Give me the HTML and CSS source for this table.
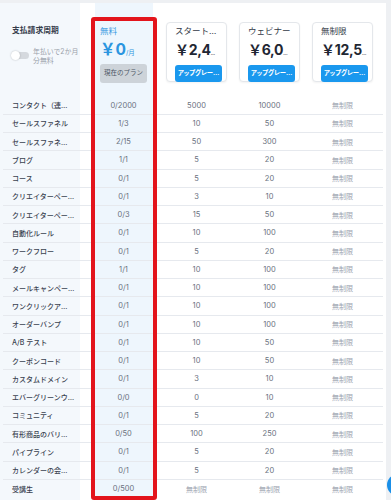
FILE: index.html
```html
<!DOCTYPE html>
<html lang="ja">
<head>
<meta charset="utf-8">
<title>プラン比較</title>
<link rel="stylesheet" href="styles.css">
</head>
<body>
<div class="card">
  <div class="row head">
    <div class="head-label">
      <div class="title">支払請求周期</div>
      <div class="toggle-row">
        <span class="toggle"><span class="knob"></span></span>
        <span class="toggle-text">年払いで2か月<br>分無料</span>
      </div>
    </div>
    <div class="free-head">
      <div class="free-name">無料</div>
      <div class="free-price"><span class="amt">￥0</span><span class="per">/月</span></div>
      <div class="current-btn">現在のプラン</div>
    </div>
    <div class="plan">
      <div class="plan-name">スタート…</div>
      <div class="plan-price"><span class="amt">￥2,4</span><span class="dots">…</span></div>
      <div class="upg">アップグレー…</div>
    </div>
    <div class="plan">
      <div class="plan-name">ウェビナー</div>
      <div class="plan-price"><span class="amt">￥6,0</span><span class="dots">…</span></div>
      <div class="upg">アップグレー…</div>
    </div>
    <div class="plan">
      <div class="plan-name">無制限</div>
      <div class="plan-price"><span class="amt">￥12,5</span><span class="dots">…</span></div>
      <div class="upg">アップグレー…</div>
    </div>
  </div>

  <div class="row data"><span class="lbl">コンタクト（連…</span><span class="val">0/2000</span><span class="val">5000</span><span class="val">10000</span><span class="val unl">無制限</span></div>
  <div class="row data"><span class="lbl">セールスファネル</span><span class="val">1/3</span><span class="val">10</span><span class="val">50</span><span class="val unl">無制限</span></div>
  <div class="row data"><span class="lbl">セールスファネ…</span><span class="val">2/15</span><span class="val">50</span><span class="val">300</span><span class="val unl">無制限</span></div>
  <div class="row data"><span class="lbl">ブログ</span><span class="val">1/1</span><span class="val">5</span><span class="val">20</span><span class="val unl">無制限</span></div>
  <div class="row data"><span class="lbl">コース</span><span class="val">0/1</span><span class="val">5</span><span class="val">20</span><span class="val unl">無制限</span></div>
  <div class="row data"><span class="lbl">クリエイターペー…</span><span class="val">0/1</span><span class="val">3</span><span class="val">10</span><span class="val unl">無制限</span></div>
  <div class="row data"><span class="lbl">クリエイターペー…</span><span class="val">0/3</span><span class="val">15</span><span class="val">50</span><span class="val unl">無制限</span></div>
  <div class="row data"><span class="lbl">自動化ルール</span><span class="val">0/1</span><span class="val">10</span><span class="val">100</span><span class="val unl">無制限</span></div>
  <div class="row data"><span class="lbl">ワークフロー</span><span class="val">0/1</span><span class="val">5</span><span class="val">20</span><span class="val unl">無制限</span></div>
  <div class="row data"><span class="lbl">タグ</span><span class="val">1/1</span><span class="val">10</span><span class="val">100</span><span class="val unl">無制限</span></div>
  <div class="row data"><span class="lbl">メールキャンペー…</span><span class="val">0/1</span><span class="val">10</span><span class="val">100</span><span class="val unl">無制限</span></div>
  <div class="row data"><span class="lbl">ワンクリックア…</span><span class="val">0/1</span><span class="val">10</span><span class="val">100</span><span class="val unl">無制限</span></div>
  <div class="row data"><span class="lbl">オーダーバンプ</span><span class="val">0/1</span><span class="val">10</span><span class="val">100</span><span class="val unl">無制限</span></div>
  <div class="row data"><span class="lbl">A/B テスト</span><span class="val">0/1</span><span class="val">10</span><span class="val">50</span><span class="val unl">無制限</span></div>
  <div class="row data"><span class="lbl">クーポンコード</span><span class="val">0/1</span><span class="val">10</span><span class="val">50</span><span class="val unl">無制限</span></div>
  <div class="row data"><span class="lbl">カスタムドメイン</span><span class="val">0/1</span><span class="val">3</span><span class="val">10</span><span class="val unl">無制限</span></div>
  <div class="row data"><span class="lbl">エバーグリーンウ…</span><span class="val">0/0</span><span class="val">0</span><span class="val">10</span><span class="val unl">無制限</span></div>
  <div class="row data"><span class="lbl">コミュニティ</span><span class="val">0/1</span><span class="val">5</span><span class="val">20</span><span class="val unl">無制限</span></div>
  <div class="row data"><span class="lbl">有形商品のバリ…</span><span class="val">0/50</span><span class="val">100</span><span class="val">250</span><span class="val unl">無制限</span></div>
  <div class="row data"><span class="lbl">パイプライン</span><span class="val">0/1</span><span class="val">5</span><span class="val">20</span><span class="val unl">無制限</span></div>
  <div class="row data"><span class="lbl">カレンダーの会…</span><span class="val">0/1</span><span class="val">5</span><span class="val">20</span><span class="val unl">無制限</span></div>
  <div class="row data last"><span class="lbl">受講生</span><span class="val">0/500</span><span class="val unl">無制限</span><span class="val unl">無制限</span><span class="val unl">無制限</span></div>

  <div class="current-frame"></div>
</div>
<div class="chat-fab"></div>
</body>
</html>
```

FILE: styles.css
```css
* { box-sizing: border-box; margin: 0; padding: 0; }
html, body { background: #eef0f3; }
body {
  font-family: Inter, "Noto Sans CJK JP", sans-serif;
  width: 391px;
  height: 500px;
  overflow: hidden;
  color: #374151;
}
.card {
  position: relative;
  margin-top: 3px;
  width: 386px;
  min-height: 497px;
  background: linear-gradient(to right, #f4f8fc 0 80px, #ffffff 80px 95px, #eef6fd 95px 153px, #ffffff 153px);
}
.row {
  display: grid;
  grid-template-columns: 84px repeat(4, 73px);
  margin: 0 3px;
}
.head { height: 93.5px; align-items: start; }

.head-label { padding: 21px 0 0 9px; }
.title { font-size: 7.8px; font-weight: 700; line-height: 12px; color: #343c4b; }
.toggle-row { display: flex; align-items: flex-start; gap: 4px; margin-top: 11px; }
.toggle {
  position: relative;
  width: 17px; height: 7px;
  margin-top: 4.7px;
  border-radius: 4px;
  background: #d5d9de;
  flex: none;
}
.knob {
  position: absolute;
  left: -1px; top: -1px;
  width: 9px; height: 9px;
  border-radius: 50%;
  background: #fff;
  box-shadow: 0 0 2px rgba(0,0,0,0.25);
}
.toggle-text { font-size: 6.9px; line-height: 9.3px; color: #9aa1ab; }

.free-head { padding: 21.7px 0 0 13px; }
.free-name { font-size: 8.5px; line-height: 12px; color: #3a9be2; }
.free-price { margin-top: 3.3px; line-height: 18px; color: #2b95e0; white-space: nowrap; }
.free-price .amt { font-size: 15.5px; font-weight: 700; }
.free-price .per { font-size: 6.5px; }
.current-btn {
  margin-top: 2px;
  width: 47px; height: 19px;
  border-radius: 3px;
  background: #cdd3d9;
  color: #4b5563;
  font-size: 6.5px;
  line-height: 19px;
  text-align: center;
  white-space: nowrap;
}

.plan {
  margin: 19px 6px 0 6px;
  height: 60px;
  border: 1px solid #e4e7eb;
  border-radius: 4px;
  background: #fff;
  box-shadow: 0 1px 2px rgba(0,0,0,0.05);
  padding: 2px 5px 0 8px;
}
.plan-name {
  font-size: 8.5px; line-height: 12px; color: #333a47;
  white-space: nowrap;
}
.plan-price {
  margin-top: 3px;
  line-height: 18px; color: #1f2733;
  white-space: nowrap;
}
.plan-price .amt { font-size: 14px; font-weight: 700; letter-spacing: -0.3px; }
.plan-price .dots { font-size: 5px; }
.upg {
  margin-top: 2.7px;
  width: 47px;
  height: 17px;
  border-radius: 3px;
  background: #1a98ee;
  color: #fff;
  font-size: 6.3px; font-weight: 700;
  font-feature-settings: "palt";
  line-height: 17px;
  padding: 0 2px 0 3px;
  white-space: nowrap;
}

.data {
  height: 18.25px;
  border-bottom: 1px solid #e6e9ee;
  align-items: center;
}
.data.last { border-bottom: none; }
.lbl {
  padding-left: 9px;
  font-size: 7px;
  font-weight: 500;
  color: #3a4250;
  white-space: nowrap;
}
.val { text-align: center; font-size: 7.5px; color: #6b7280; }
.val.unl { font-size: 7px; color: #9ca3af; }

.current-frame {
  position: absolute;
  left: 91px; top: 14.3px;
  width: 66px; height: 483px;
  border: 4px solid #e3141c;
  border-radius: 3px;
  pointer-events: none;
}
.chat-fab {
  position: fixed;
  left: 387px; top: 474px;
  width: 22px; height: 22px;
  border-radius: 50%;
  background: #1a8fe8;
}
```
